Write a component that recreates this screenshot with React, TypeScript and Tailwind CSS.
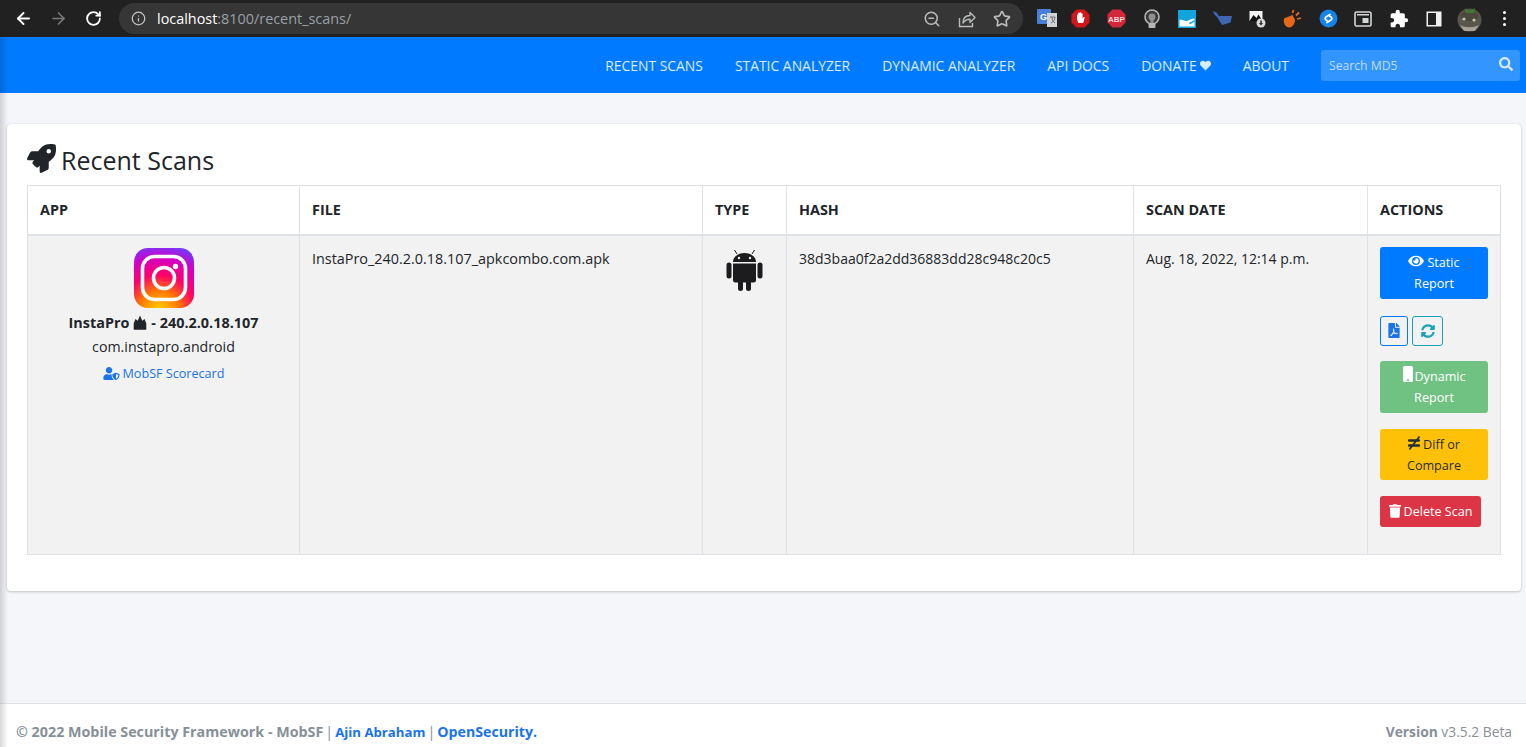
import {
  FaEye,
  FaFilePdf,
  FaHeart,
  FaMobile,
  FaNotEqual,
  FaRocket,
  FaSearch,
  FaSyncAlt,
  FaTrash,
  FaUserShield,
} from "react-icons/fa";
import { MdExtension } from "react-icons/md";
import { ArrowLeft, ArrowRight, Info, RotateCw, Star, ZoomOut } from "lucide-react";

function ChromeBar() {
  return (
    <div className="flex h-[37px] items-center bg-[#212121]">
      <ArrowLeft strokeWidth={2.4} className="ml-[14px] h-[19px] w-[19px] text-white" />
      <ArrowRight strokeWidth={2} className="ml-[16px] h-[19px] w-[19px] text-[#7b7c7e]" />
      <RotateCw strokeWidth={2.6} className="ml-[17px] h-[17px] w-[17px] text-white" />
      <div className="ml-[17px] flex h-[31px] w-[904px] items-center rounded-full bg-[#363636] pl-[12px] pr-[12px]">
        <Info className="h-[15px] w-[15px] text-[#c4c7c5]" />
        <span className="ml-[11px] text-[14.4px] text-[#9aa0a6]">
          <span className="text-white">localhost</span>:8100/recent_scans/
        </span>
        <div className="ml-auto flex items-center gap-[17px] text-[#b9bbbd]">
          <ZoomOut className="h-[18px] w-[18px]" />
          <svg width="18" height="18" viewBox="0 0 18 18" fill="none" stroke="currentColor" strokeWidth="1.4">
            <path d="M1.5 8v8.5h13V13" />
            <path d="M5 13c0-5 3-7.500 7-7.500V2.500l5 5-5 5V9.300c-3 0-5 1-7 3.700z" strokeLinejoin="round" />
          </svg>
          <Star strokeWidth={2.2} className="h-[18px] w-[18px]" />
        </div>
      </div>
      <Extensions />
    </div>
  );
}

function Extensions() {
  return (
    <div className="ml-[5px] grid grid-cols-[repeat(14,35.3px)] items-center justify-items-center">
      <svg width="21" height="19" viewBox="0 0 21 19" className="ml-[3px]">
        <rect x="0" y="0" width="14" height="15" rx="1" fill="#4a7fd9" />
        <rect x="10" y="4" width="10" height="14" fill="#cfd3d6" />
        <path d="M13 8h5M15 8c0 3 1 5 3 6M18 8c0 3-2 5-4 6" stroke="#6f7376" strokeWidth="1" fill="none" />
        <text x="3" y="11" fontSize="9" fontWeight="700" fill="#fff" fontFamily="Liberation Sans, sans-serif">G</text>
      </svg>
      <svg width="19" height="19" viewBox="0 0 19 19">
        <polygon points="5.500,0.500 13.500,0.500 18.500,5.500 18.500,13.500 13.500,18.500 5.500,18.500 0.500,13.500 0.500,5.500" fill="#d3161b" />
        <path d="M6 9V5.500h1.300V9 3.800h1.500V9 3.300h1.400V9 4.500h1.400v5.200l1-1.700h1.200l-1.600 6H7.500L6 11z" fill="#fff" />
      </svg>
      <svg width="19" height="19" viewBox="0 0 19 19">
        <polygon points="5.500,0.500 13.500,0.500 18.500,5.500 18.500,13.500 13.500,18.500 5.500,18.500 0.500,13.500 0.500,5.500" fill="#d3283a" />
        <text x="9.500" y="12.500" fontSize="8" fontWeight="700" fill="#f4d5d8" textAnchor="middle" fontFamily="Liberation Sans, sans-serif">ABP</text>
      </svg>
      <svg width="16" height="20" viewBox="0 0 16 20">
        <circle cx="8" cy="8" r="7" fill="#3a3a3a" stroke="#b5b7b9" strokeWidth="1.6" />
        <circle cx="8" cy="8" r="3.400" fill="#8f9193" />
        <rect x="6.500" y="8" width="3" height="6" fill="#8f9193" />
        <rect x="4.500" y="14" width="7" height="5" rx="1" fill="#b5b7b9" />
      </svg>
      <svg width="18" height="18" viewBox="0 0 18 18">
        <rect width="18" height="18" fill="#12a5dd" />
        <path d="M1.500 16.500v-7c3 0 5 1.500 7 1.500 2 0 3-2 8-2.500v8z" fill="#fff" />
        <path d="M11 13l5.500-3v1.500L12 14.500z" fill="#12a5dd" />
      </svg>
      <svg width="19" height="15" viewBox="0 0 19 15">
        <path d="M0 0l3.500 1.500L6 5h13l-1.500 6.500L9 14 4 6 1 3z" fill="#3f66b3" />
      </svg>
      <svg width="17" height="18" viewBox="0 0 17 18">
        <rect x="0.500" y="1" width="13" height="10" fill="#f2f2f2" />
        <path d="M0.500 11l4-6 3 3 2-3.500 4 6.500z" fill="#111" />
        <circle cx="12" cy="13" r="4.500" fill="#d8d8d8" />
        <path d="M11.300 10.500h1.400v2.500h1.300L12 15.500 10 13h1.300z" fill="#222" />
      </svg>
      <svg width="19" height="19" viewBox="0 0 19 19">
        <path d="M1 9.500l8.500-3.500 2.500 5c0 4-3 7.500-6 7.500S0 15 1 9.500z" fill="#e8681a" />
        <path d="M9.500 4l1-3M13 6.500l3-3M14 10l4-1" stroke="#e8681a" strokeWidth="1.800" />
      </svg>
      <svg width="19" height="19" viewBox="0 0 19 19">
        <circle cx="9.500" cy="9.500" r="9" fill="#1683e8" />
        <path d="M11 5.500L7 8a1.800 1.800 0 000 3l1 .6M8 13.500l4-2.500a1.800 1.800 0 000-3l-1-.6" fill="none" stroke="#fff" strokeWidth="1.800" strokeLinecap="round" />
      </svg>
      <svg width="18" height="16" viewBox="0 0 18 16">
        <rect x="1" y="1" width="16" height="14" rx="1.500" fill="none" stroke="#d4d5d6" strokeWidth="1.600" />
        <rect x="8.500" y="7" width="6" height="5" fill="#d4d5d6" />
        <rect x="3" y="3" width="12" height="1.500" fill="#d4d5d6" />
      </svg>
      <MdExtension className="h-[20px] w-[20px] text-white" />
      <svg width="16" height="16" viewBox="0 0 16 16">
        <rect x="0.500" y="0.500" width="15" height="15" fill="#f1f1f1" />
        <rect x="2" y="2" width="8" height="12" fill="#212121" />
      </svg>
      <svg width="25" height="26" viewBox="0 0 25 26">
        <ellipse cx="12.500" cy="14" rx="12" ry="11.500" fill="#59564c" />
        <ellipse cx="12.500" cy="10" rx="9" ry="5" fill="#4a483f" />
        <circle cx="7" cy="13" r="1.600" fill="#c7c3b2" />
        <circle cx="17" cy="14" r="1.600" fill="#c7c3b2" />
        <path d="M8 2c2 2 3 1 4.500 3C14 3 16 4 18 2l-1 5H9z" fill="#3f7a33" />
        <path d="M3 19c5 3 14 3 19 0l-4 6H7z" fill="#a8a294" />
      </svg>
      <div className="flex flex-col gap-[3px]">
        <span className="h-[3px] w-[3px] rounded-full bg-white" />
        <span className="h-[3px] w-[3px] rounded-full bg-white" />
        <span className="h-[3px] w-[3px] rounded-full bg-white" />
      </div>
    </div>
  );
}

function NavBar() {
  const links = ["RECENT SCANS", "STATIC ANALYZER", "DYNAMIC ANALYZER", "API DOCS"];
  return (
    <nav className="flex h-[56px] items-center justify-end bg-[#007bff] pr-[6px] text-[13.9px] text-white/85">
      {links.map((l) => (
        <a key={l} className="mr-[32px] mt-[2px]">
          {l}
        </a>
      ))}
      <a className="mr-[32px] mt-[2px] flex items-center gap-[3px]">
        DONATE <FaHeart className="h-[11px] w-[11px]" />
      </a>
      <a className="mr-[32px] mt-[2px]">ABOUT</a>
      <div className="flex h-[31px] w-[199px] items-center justify-between rounded-[3px] bg-white/20 pl-[8px] pr-[7px] pt-[2px] text-[12.2px] text-white/70">
        Search MD5
        <FaSearch className="mb-[4px] h-[14px] w-[14px] text-white/80" />
      </div>
    </nav>
  );
}

function InstagramIcon() {
  return (
    <svg width="60" height="60" viewBox="0 0 60 60" className="mx-auto">
      <defs>
        <radialGradient id="ig" cx="0.42" cy="1.05" r="1.1">
          <stop offset="0" stopColor="#ffd600" />
          <stop offset="0.3" stopColor="#ff7a00" />
          <stop offset="0.55" stopColor="#ff0069" />
          <stop offset="0.8" stopColor="#d300c5" />
          <stop offset="1" stopColor="#7638fa" />
        </radialGradient>
      </defs>
      <rect width="60" height="60" rx="14" fill="url(#ig)" />
      <rect x="8.500" y="8.500" width="43" height="43" rx="12" fill="none" stroke="#fff" strokeWidth="3.600" />
      <circle cx="30" cy="30" r="10.500" fill="none" stroke="#fff" strokeWidth="3.600" />
      <circle cx="41.500" cy="18.500" r="2.700" fill="#fff" />
    </svg>
  );
}

function AndroidIcon() {
  return (
    <svg width="37" height="42" viewBox="0 0 37 42" fill="#1c1c1e" className="mx-auto mt-[1px]">
      <path d="M7 13c0-5 5-9 11.500-9S30 8 30 13z" />
      <path d="M11 5L8.500 1M26 5l2.500-4" stroke="#1c1c1e" strokeWidth="1" />
      <circle cx="13" cy="9" r="1.200" fill="#f2f2f2" />
      <circle cx="24" cy="9" r="1.200" fill="#f2f2f2" />
      <path d="M7 14.500h23V31a2.500 2.500 0 01-2.500 2.500h-18A2.500 2.500 0 017 31z" />
      <rect x="0.500" y="13.500" width="5" height="16" rx="2.500" />
      <rect x="31.500" y="13.500" width="5" height="16" rx="2.500" />
      <rect x="12" y="30" width="5" height="12" rx="2.500" />
      <rect x="20" y="30" width="5" height="12" rx="2.500" />
    </svg>
  );
}

function ActionButtons() {
  return (
    <div className="-mt-[1px] flex flex-col items-start text-[12.6px]">
      <a className="w-[108px] rounded-[3px] bg-[#007bff] px-[8px] py-[5px] text-center leading-[21px] text-white">
        <FaEye className="mr-[3px] inline h-[14px] w-[16px] align-[-1px]" />
        Static Report
      </a>
      <div className="mt-[17px] flex gap-[4px]">
        <a className="flex h-[30px] w-[28px] items-center justify-center rounded-[3px] border border-[#007bff] text-[#1a73e8]">
          <FaFilePdf className="h-[15px] w-[12px]" />
        </a>
        <a className="flex h-[30px] w-[31px] items-center justify-center rounded-[3px] border border-[#17a2b8] text-[#17a2b8]">
          <FaSyncAlt className="h-[14px] w-[14px]" />
        </a>
      </div>
      <a className="mt-[15px] w-[108px] rounded-[3px] bg-[#70c282] px-[8px] py-[5px] text-center leading-[21px] text-white">
        <FaMobile className="inline h-[16px] w-[12px] align-[-1px]" />
        Dynamic Report
      </a>
      <a className="mt-[16px] w-[108px] rounded-[3px] bg-[#ffc107] px-[8px] pb-[4px] pt-[5px] text-center leading-[21px] text-[#1f2d3d]">
        <FaNotEqual className="mr-[3px] inline h-[14px] w-[12px] align-[-1px]" />
        Diff or Compare
      </a>
      <a className="mt-[16px] flex h-[31px] w-[101px] items-center justify-center gap-[3px] rounded-[3px] bg-[#dc3545] text-white">
        <FaTrash className="h-[14px] w-[12px]" />
        Delete Scan
      </a>
    </div>
  );
}

export default function App() {
  const cell = "border border-[#dee2e6] p-[12px] align-top leading-[21px]";
  const head = "border border-b-2 border-[#dee2e6] px-[12px] text-left text-[14.4px] font-bold";
  return (
    <div
      className="relative flex h-[747px] flex-col overflow-hidden bg-[#f4f6f9] text-[#212529]"
      style={{ fontFamily: '"Open Sans", "Noto Sans", sans-serif' }}
    >
      <ChromeBar />
      <NavBar />
      <main className="flex-1 pl-[7px] pr-[5px] pt-[31px]">
        <div className="h-[467px] rounded-[4px] bg-white px-[20px] pt-[20px] shadow-[0_0_1px_rgba(0,0,0,0.125),0_1px_3px_rgba(0,0,0,0.2)]">
          <h3 className="flex h-[41px] items-start gap-[5px] text-[25px] leading-[33px]">
            <FaRocket className="h-[29px] w-[29px]" />
            Recent Scans
          </h3>
          <table className="w-[1473px] table-fixed border-collapse text-[14.2px]">
            <colgroup>
              <col className="w-[272px]" />
              <col className="w-[403px]" />
              <col className="w-[84px]" />
              <col className="w-[347px]" />
              <col className="w-[234px]" />
              <col className="w-[133px]" />
            </colgroup>
            <thead>
              <tr className="h-[49px]">
                <th className={head}>APP</th>
                <th className={head}>FILE</th>
                <th className={head}>TYPE</th>
                <th className={head}>HASH</th>
                <th className={head}>SCAN DATE</th>
                <th className={head}>ACTIONS</th>
              </tr>
            </thead>
            <tbody>
              <tr className="h-[320px] bg-[#f2f2f2]">
                <td className={cell + " text-center"}>
                  <InstagramIcon />
                  <p className="mt-[3px] flex items-center justify-center gap-[3px] text-[14.4px] font-bold leading-[24px]">
                    InstaPro
                    <svg width="16" height="16" viewBox="0 0 14 14" fill="#212529">
                      <path d="M1.500 13V7.500L3 3.500l2 1.500L7 .5l2 4.500 2-1.500 1.500 4V13z" />
                    </svg>
                    - 240.2.0.18.107
                  </p>
                  <p className="leading-[24px]">com.instapro.android</p>
                  <a className="mt-[4px] flex items-center justify-center gap-[3px] text-[12.6px] text-[#1a73e8]">
                    <FaUserShield className="h-[13px] w-[17px]" />
                    MobSF Scorecard
                  </a>
                </td>
                <td className={cell + " text-[14.4px]"}>InstaPro_240.2.0.18.107_apkcombo.com.apk</td>
                <td className={cell}>
                  <AndroidIcon />
                </td>
                <td className={cell + " text-[14px]"}>38d3baa0f2a2dd36883dd28c948c20c5</td>
                <td className={cell + " text-[14px]"}>Aug. 18, 2022, 12:14 p.m.</td>
                <td className={cell}>
                  <ActionButtons />
                </td>
              </tr>
            </tbody>
          </table>
        </div>
      </main>
      <footer className="flex h-[44px] items-center justify-between border-t border-[#dee2e6] bg-white px-[14px] pt-[12px] text-[14.3px] text-[#869099]">
        <p className="flex items-baseline gap-[2px] pl-[2px]">
          <strong>© 2022 Mobile Security Framework - MobSF</strong>
          <span>|</span>
          <strong className="text-[13.2px] text-[#1a73e8]">Ajin Abraham</strong>
          <span>|</span>
          <strong className="text-[14.2px] text-[#1a73e8]">OpenSecurity.</strong>
        </p>
        <p className="pt-[1px] text-[13.8px]">
          <strong>Version</strong> v3.5.2 Beta
        </p>
      </footer>
      <div className="pointer-events-none absolute bottom-0 left-0 top-[37px] w-[8px] bg-gradient-to-r from-black/15 to-transparent" />
    </div>
  );
}
